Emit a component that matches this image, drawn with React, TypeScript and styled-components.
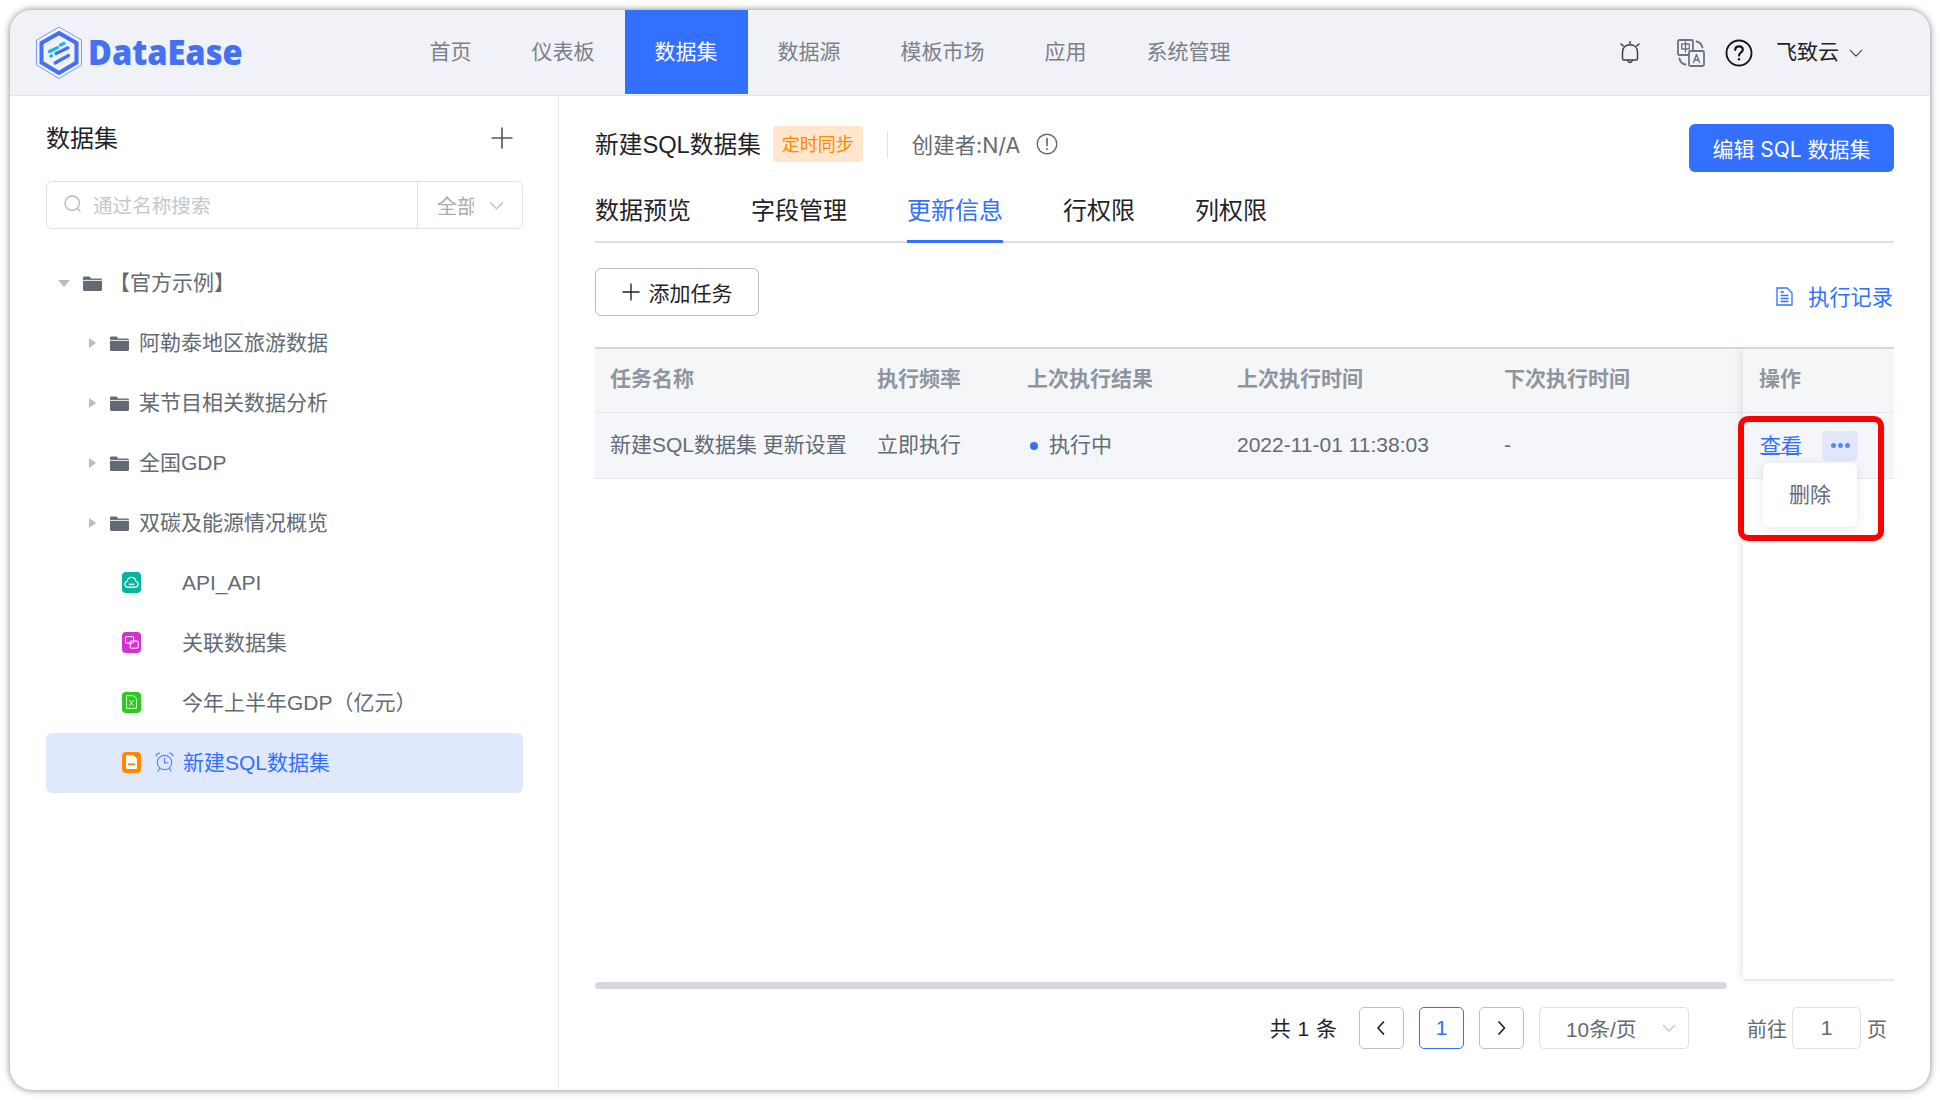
import React from 'react';
import styled, { createGlobalStyle } from 'styled-components';

const FONT = `"Liberation Sans", "Noto Sans CJK SC", sans-serif`;
const BLUE = '#3370ff';
const GREY = '#646a73';

const Global = createGlobalStyle`
  html, body { margin: 0; padding: 0; background: #fff; }
  body { width: 1940px; height: 1100px; overflow: hidden; font-family: ${FONT}; }
  * { box-sizing: border-box; }
`;

const Page = styled.div`
  width: 1940px;
  height: 1100px;
  padding: 10px;
`;
const Window = styled.div`
  width: 1920px;
  height: 1080px;
  border-radius: 22px;
  background: #fff;
  box-shadow: 0 0 7px rgba(0, 0, 0, 0.5);
  display: flex;
  flex-direction: column;
  overflow: hidden;
`;

const Header = styled.header`
  height: 86px;
  flex: none;
  display: flex;
  align-items: flex-start;
  background: #f0f2f8;
  border-bottom: 1px solid #e4e6ec;
`;
const LogoBox = styled.div`
  width: 389.5px;
  height: 85px;
  flex: none;
  padding-left: 26px;
  display: flex;
  align-items: center;
  gap: 5px;
`;
const LogoText = styled.span`
  font-family: "Open Sans", sans-serif;
  font-weight: 800;
  font-size: 36px;
  margin-bottom: 2px;
  color: #4370f5;
  transform: scaleX(0.905);
  transform-origin: left center;
`;
const Nav = styled.nav`
  display: flex;
  height: 84px;
`;
const NavItem = styled.div<{ $active?: boolean }>`
  height: 84px;
  padding: 0 30px 5px;
  display: flex;
  align-items: center;
  font-size: 21px;
  color: ${p => (p.$active ? '#fff' : '#7c8088')};
  background: ${p => (p.$active ? BLUE : 'transparent')};
`;
const HeaderRight = styled.div`
  margin-left: auto;
  height: 85px;
  display: flex;
  align-items: center;
  padding-right: 67px;
  color: #1f2329;
`;
const HeaderIcon = styled.span<{ $gap: number }>`
  display: flex;
  margin-right: ${p => p.$gap}px;
`;
const UserName = styled.span`
  font-size: 21px;
  color: #1f2329;
  margin: 0 10px 5px 0;
`;

const Body = styled.div`
  flex: 1;
  display: flex;
  min-height: 0;
`;
const Sidebar = styled.aside`
  width: 549px;
  flex: none;
  border-right: 1px solid #e6e8ee;
  padding: 22px 35px 0 36px;
`;
const SideHead = styled.div`
  height: 40px;
  display: flex;
  align-items: center;
  justify-content: space-between;
  padding-right: 10px;
`;
const SideTitle = styled.span`
  font-size: 24px;
  color: #1f2329;
  margin: 0 0 4px 0;
`;
const SearchBox = styled.div`
  margin-top: 23px;
  width: 477px;
  height: 48px;
  border: 1px solid #dee0e3;
  border-radius: 6px;
  display: flex;
  align-items: center;
`;
const SearchMain = styled.div`
  width: 371px;
  height: 100%;
  display: flex;
  align-items: center;
  padding: 0 0 2px 16px;
  gap: 10px;
  border-right: 1px solid #dee0e3;
  font-size: 19.6px;
  color: #c4c7cc;
`;
const SearchScope = styled.div`
  flex: 1;
  display: flex;
  align-items: center;
  justify-content: space-between;
  padding: 0 18px 0 19px;
  font-size: 20px;
  color: #a8abb2;
`;
const ScopeText = styled.span`
  display: block;
  width: 37px;
  overflow: hidden;
  white-space: nowrap;
`;
const Tree = styled.div`
  margin-top: 24px;
`;
const TreeRow = styled.div<{ $pad: number; $active?: boolean }>`
  height: 60px;
  padding-left: ${p => p.$pad}px;
  display: flex;
  align-items: center;
  font-size: 21px;
  color: ${p => (p.$active ? BLUE : GREY)};
  background: ${p => (p.$active ? '#dfe8fd' : 'transparent')};
  border-radius: 6px;
`;
const TreeLabel = styled.span<{ $latin?: boolean }>`
  margin-bottom: ${p => (p.$latin ? 1 : 4)}px;
`;
const CaretBox = styled.span`
  width: 24px;
  flex: none;
  display: flex;
  justify-content: center;
`;
const CaretRight = styled.i`
  width: 0;
  height: 0;
  border-left: 7px solid #b9bcc2;
  border-top: 5px solid transparent;
  border-bottom: 5px solid transparent;
`;
const CaretDown = styled.i`
  width: 0;
  height: 0;
  border-top: 7px solid #b9bcc2;
  border-left: 6px solid transparent;
  border-right: 6px solid transparent;
`;
const FolderSlot = styled.span<{ $before: number; $after: number }>`
  display: flex;
  margin: 0 ${p => p.$after}px 0 ${p => p.$before}px;
`;
const TypeBadge = styled.span<{ $color: string }>`
  width: 19px;
  height: 21px;
  flex: none;
  margin-bottom: 2px;
  border-radius: 4px;
  background: ${p => p.$color};
  display: flex;
  align-items: center;
  justify-content: center;
`;
const AlarmSlot = styled.span<{ $after: number }>`
  width: 19px;
  height: 20px;
  flex: none;
  margin: 0 ${p => p.$after}px 2px 14px;
  display: flex;
`;

const Main = styled.main`
  flex: 1;
  min-width: 0;
  padding: 28px 36px 0;
  display: flex;
  flex-direction: column;
`;
const TitleRow = styled.div`
  height: 48px;
  display: flex;
  justify-content: space-between;
  align-items: flex-start;
`;
const TitleGroup = styled.div`
  height: 40px;
  display: flex;
  align-items: center;
`;
const Title = styled.h1`
  margin: 0 0 2px;
  font-size: 23.7px;
  font-weight: 400;
  color: #1f2329;
`;
const SyncTag = styled.span`
  margin-left: 12px;
  width: 90px;
  height: 36px;
  padding-bottom: 2px;
  display: flex;
  align-items: center;
  justify-content: center;
  background: #ffe6cc;
  color: #ff8800;
  font-size: 18px;
  border-radius: 4px;
`;
const VDivider = styled.i`
  width: 1px;
  height: 27px;
  margin: 0 24px;
  background: #dee0e3;
`;
const Creator = styled.span`
  font-family: "Inter", "Noto Sans CJK SC", sans-serif;
  font-size: 21.4px;
  margin-bottom: 2px;
  color: ${GREY};
`;
const InfoWrap = styled.span`
  display: flex;
  margin-left: 16px;
`;
const PrimaryBtn = styled.button`
  width: 205px;
  height: 48px;
  border: none;
  border-radius: 6px;
  background: ${BLUE};
  color: #fff;
  font-family: "Inter", "Noto Sans CJK SC", sans-serif;
  font-size: 21px;
  padding: 0;
`;
const Tabs = styled.div`
  margin-top: 7px;
  height: 64px;
  display: flex;
  gap: 60px;
  border-bottom: 2px solid #dee0e3;
`;
const Tab = styled.div<{ $active?: boolean }>`
  height: 64px;
  padding-top: 16px;
  line-height: 32px;
  font-size: 24px;
  color: ${p => (p.$active ? BLUE : '#1f2329')};
  border-bottom: 3px solid ${p => (p.$active ? BLUE : 'transparent')};
`;
const Toolbar = styled.div`
  margin-top: 25px;
  display: flex;
  justify-content: space-between;
  align-items: center;
`;
const AddBtn = styled.button`
  width: 164px;
  height: 48px;
  border: 1px solid #bbbfc4;
  border-radius: 6px;
  background: #fff;
  font-family: ${FONT};
  font-size: 21px;
  color: #1f2329;
  padding: 0;
  display: flex;
  align-items: center;
  justify-content: center;
  gap: 9px;
`;
const RecordLink = styled.span`
  margin-top: 8px;
  font-size: 21.2px;
  color: ${BLUE};
  display: flex;
  align-items: center;
  gap: 15px;
`;
const RecordText = styled.span`
  margin-bottom: 2px;
  padding-right: 1px;
`;

const TableArea = styled.div`
  margin-top: 31px;
  height: 642px;
  display: flex;
  align-items: stretch;
`;
const TableLeft = styled.div`
  flex: 1;
  min-width: 0;
  display: flex;
  flex-direction: column;
  border-top: 2px solid #d3d7e0;
`;
const GridHead = styled.div`
  height: 64px;
  padding-left: 15px;
  display: grid;
  grid-template-columns: 267px 150px 210px 267px 1fr;
  align-items: center;
  background: #f5f6f8;
  border-bottom: 1px solid #e4e8f0;
  font-size: 21px;
  font-weight: 700;
  color: #8f959e;
`;
const GridRow = styled.div`
  height: 66px;
  padding-left: 15px;
  display: grid;
  grid-template-columns: 267px 150px 210px 267px 1fr;
  align-items: center;
  background: #f5f6fa;
  border-bottom: 1px solid #e4e8f0;
  font-size: 21px;
  color: ${GREY};
`;
const HeadCell = styled.span`
  white-space: nowrap;
  margin-bottom: 7px;
`;
const Cell = styled.span<{ $latin?: boolean }>`
  white-space: nowrap;
  margin-bottom: ${p => (p.$latin ? 1 : 5)}px;
`;
const StatusCell = styled.span`
  display: flex;
  align-items: center;
  gap: 11px;
  padding-left: 3px;
`;
const StatusText = styled.span`
  margin-bottom: 5px;
`;
const Dot = styled.i`
  width: 8px;
  height: 8px;
  border-radius: 50%;
  background: ${BLUE};
`;
const HScroll = styled.div`
  margin-top: auto;
  width: 1132px;
  height: 7px;
  border-radius: 4px;
  background: #d5d8e2;
`;
const FixedCol = styled.div`
  position: relative;
  z-index: 1;
  width: 151px;
  flex: none;
  margin-bottom: 8px;
  border-top: 2px solid #d3d7e0;
  border-bottom: 2px solid #e8ebf6;
  background: #fff;
  box-shadow: -5px 0 8px -3px rgba(0, 0, 0, 0.1);
`;
const OpsHead = styled.div`
  height: 64px;
  padding: 0 0 7px 16px;
  display: flex;
  align-items: center;
  background: #f5f6f8;
  border-bottom: 1px solid #e4e8f0;
  font-size: 21px;
  font-weight: 700;
  color: #8f959e;
`;
const OpsRow = styled.div`
  position: relative;
  height: 66px;
  padding-left: 17px;
  display: flex;
  align-items: center;
  background: #f5f6fa;
  border-bottom: 1px solid #e4e8f0;
`;
const ViewLink = styled.span`
  font-size: 21px;
  margin-bottom: 4px;
  color: ${BLUE};
  text-decoration: underline;
  text-decoration-thickness: 1px;
  text-underline-offset: 0px;
`;
const MoreBtn = styled.span`
  margin-left: 20px;
  width: 36px;
  height: 30px;
  border-radius: 5px;
  background: #e1e8fb;
  display: flex;
  align-items: center;
  justify-content: center;
  gap: 2px;
`;
const MoreDot = styled.i`
  width: 5px;
  height: 5px;
  border-radius: 50%;
  background: #5c88f5;
`;
const Popover = styled.div`
  position: absolute;
  left: 20px;
  top: 50px;
  width: 94px;
  height: 64px;
  padding-bottom: 4px;
  background: #fff;
  border-radius: 6px;
  box-shadow: 0 2px 12px rgba(31, 35, 41, 0.1);
  display: flex;
  align-items: center;
  justify-content: center;
  font-size: 21px;
  color: ${GREY};
`;
const Highlight = styled.div`
  position: absolute;
  left: -5px;
  top: 3px;
  width: 146px;
  height: 125px;
  border: 6px solid #ff0000;
  border-radius: 10px;
  pointer-events: none;
`;

const Pager = styled.div`
  margin-top: 18px;
  height: 42px;
  padding-right: 7px;
  display: flex;
  justify-content: flex-end;
  align-items: center;
`;
const Total = styled.span`
  font-size: 21px;
  word-spacing: 1px;
  color: #1f2329;
  margin: 0 22px 3px 0;
`;
const PageBtn = styled.span<{ $active?: boolean }>`
  width: 45px;
  height: 42px;
  margin-right: 15px;
  border: 1px solid ${p => (p.$active ? BLUE : '#bbbfc4')};
  border-radius: 5px;
  display: flex;
  align-items: center;
  justify-content: center;
  font-size: 21px;
  color: ${p => (p.$active ? BLUE : '#1f2329')};
`;
const SizeSelect = styled.span`
  width: 150px;
  height: 42px;
  margin-right: 58px;
  padding: 0 12px 0 26px;
  border: 1px solid #dee0e3;
  border-radius: 5px;
  display: flex;
  align-items: center;
  justify-content: space-between;
  font-size: 20.8px;
  color: ${GREY};
`;
const PagerText = styled.span`
  font-size: 20px;
  color: ${GREY};
`;
const JumpInput = styled.span`
  width: 69px;
  height: 42px;
  margin: 0 6px 0 5px;
  border: 1px solid #dee0e3;
  border-radius: 5px;
  display: flex;
  align-items: center;
  justify-content: center;
  font-size: 21px;
  color: ${GREY};
`;

const Chevron = ({ size = 15, color = '#1f2329', w = 1.4 }: { size?: number; color?: string; w?: number }) => (
  <svg width={size} height={size} viewBox="0 0 16 16" fill="none" stroke={color} strokeWidth={w} strokeLinecap="round" strokeLinejoin="round">
    <path d="M1.5 5 L8 11.5 L14.5 5" />
  </svg>
);

const Logo = () => (
  <svg width="47" height="54" viewBox="6 4 47 54" fill="none">
    <path d="M29 5 L51.5 18 L51.5 43 L29 56.5 L6.5 43 L6.5 18 Z" stroke="#7c9cf7" strokeWidth="1" />
    <path d="M29 11 L46.5 21 L46.5 40.5 L29 51 L11.5 40.5 L11.5 21 Z" stroke="#4370f5" strokeWidth="4" />
    <g strokeLinecap="round" strokeWidth="3.2">
      <path d="M30.5 23 L34 21.4" stroke="#13b5f5" />
      <path d="M19.5 29.5 L27.5 25.6" stroke="#13b5f5" />
      <path d="M20.8 34.2 L21.6 33.8" stroke="#13b5f5" />
      <path d="M26 31.5 L38 25.8" stroke="#4370f5" />
      <path d="M25 41 L38.5 33.5" stroke="#4370f5" />
    </g>
  </svg>
);

const BellIcon = () => (
  <svg width="20" height="26" viewBox="0 0 20 26" fill="none" stroke="#3a3f47" strokeWidth="1.5" strokeLinecap="round" strokeLinejoin="round">
    <path d="M2.5 18.2 V12 C2.5 7.6 5.6 4.8 10 4.8 C14.4 4.8 17.5 7.6 17.5 12 V18.2 C17.5 19.4 17 20 16 20 H4 C3 20 2.5 19.4 2.5 18.2 Z" />
    <path d="M7.8 20.5 C8.2 23 11.8 23 12.2 20.5" />
    <path d="M10 1.8 V3.2" />
    <path d="M1 4 L3.2 5.8" />
    <path d="M19 4 L16.8 5.8" />
  </svg>
);

const TranslateIcon = () => (
  <svg width="28" height="28" viewBox="0 0 28 28" fill="none" stroke="#6e727a" strokeWidth="1.8" strokeLinecap="round" strokeLinejoin="round">
    <rect x="1" y="1" width="15" height="15" rx="1.5" fill="#f0f2f8" />
    <rect x="12" y="12" width="15" height="15" rx="1.5" fill="#f0f2f8" />
    <rect x="4.7" y="5" width="7.6" height="5" strokeWidth="1.3" />
    <path d="M8.5 3 V13" strokeWidth="1.3" />
    <path d="M16.5 23.5 L19.5 15.5 L22.5 23.5 M17.5 21 H21.5" strokeWidth="1.4" />
    <path d="M19.5 2.5 C22.5 3 24.5 5 25.5 8.5" />
    <path d="M2.5 19.5 C3 22.5 5.5 25 8.5 25.5" />
  </svg>
);

const HelpIcon = () => (
  <svg width="28" height="28" viewBox="0 0 28 28" fill="none" stroke="#15181d" strokeWidth="1.9" strokeLinecap="round">
    <circle cx="14" cy="14" r="12.5" />
    <path d="M10.2 11 C10.2 8.7 12 7.4 14 7.4 C16.2 7.4 17.8 8.8 17.8 10.8 C17.8 13.3 14 13.6 14 16.6" strokeWidth="2.2" />
    <circle cx="14" cy="20.3" r="1.2" fill="#15181d" stroke="none" />
  </svg>
);

const SearchIcon = () => (
  <svg width="20" height="20" viewBox="0 0 20 20" fill="none" stroke="#b5b9bf" strokeWidth="1.4" strokeLinecap="round">
    <circle cx="9.2" cy="9.2" r="7.2" />
    <path d="M14.6 14.6 L17 17" />
  </svg>
);

const PlusIcon = ({ size, color }: { size: number; color: string }) => (
  <svg width={size} height={size} viewBox="0 0 20 20" fill="none" stroke={color} strokeWidth="1.5">
    <path d="M10 0.5 V19.5 M0.5 10 H19.5" />
  </svg>
);

const FolderIcon = () => (
  <svg width="19" height="15" viewBox="0 0 19 15">
    <path d="M0 2 C0 1 .7 .5 1.5 .5 H6.5 L8.2 2.5 H17.5 C18.4 2.5 19 3 19 4 V13.5 C19 14.4 18.4 15 17.5 15 H1.5 C.6 15 0 14.4 0 13.5 Z" fill="#646a73" />
    <path d="M0 4.4 H19" stroke="#fff" strokeWidth="0.9" />
  </svg>
);

const ApiGlyph = () => (
  <svg width="15" height="13" viewBox="0 0 16 14" fill="none" stroke="#fff" strokeWidth="1.2" strokeLinejoin="round">
    <path d="M4 12 C1.8 12 .8 10.5 .8 9 C.8 7.3 2 6.2 3.4 6 C3.6 3.2 5.6 1.5 8 1.5 C10.4 1.5 12.4 3.2 12.6 6 C14 6.2 15.2 7.3 15.2 9 C15.2 10.5 14.2 12 12 12 Z" />
    <path d="M5 9 H11" strokeWidth="1.6" />
  </svg>
);
const JoinGlyph = () => (
  <svg width="14" height="13" viewBox="0 0 14 13" fill="none" stroke="#fff" strokeWidth="1">
    <rect x="0.6" y="0.6" width="8" height="6.5" rx="1" />
    <rect x="5.2" y="5" width="8" height="7.2" rx="1" />
  </svg>
);
const ExcelGlyph = () => (
  <svg width="11" height="14" viewBox="0 0 12 15" fill="none" stroke="#fff" strokeWidth="1">
    <path d="M.6.6 H8 L11.4 4 V14.4 H.6 Z" />
    <path d="M3.8 5.5 L8.2 11.5 M8.2 5.5 L3.8 11.5" />
  </svg>
);
const SqlGlyph = () => (
  <svg width="11" height="14" viewBox="0 0 12 15">
    <path d="M0 1 Q0 0 1 0 H8 L12 4 V14 Q12 15 11 15 H1 Q0 15 0 14 Z" fill="#fff" />
    <path d="M2 10 H10" stroke="#ff8800" strokeWidth="2" />
  </svg>
);

const AlarmIcon = () => (
  <svg width="19" height="20" viewBox="0 0 19 20" fill="none" stroke="#5c88f5" strokeWidth="1.2" strokeLinecap="round">
    <circle cx="9.5" cy="10.5" r="7.2" />
    <path d="M9.5 6 V10.8 H13" />
    <path d="M1 4 C1.5 2.3 3 1.2 4.6 1.2 M18 4 C17.5 2.3 16 1.2 14.4 1.2" />
    <path d="M4.6 16.5 L3 19 M14.4 16.5 L16 19" />
  </svg>
);

const InfoIcon = () => (
  <svg width="22" height="22" viewBox="0 0 22 22" fill="none" stroke="#646a73" strokeWidth="1.4" strokeLinecap="round">
    <circle cx="11" cy="11" r="9.8" />
    <path d="M11 5.5 V12.5" strokeWidth="1.7" />
    <circle cx="11" cy="16" r="1" fill="#646a73" stroke="none" />
  </svg>
);

const DocIcon = () => (
  <svg width="17" height="19" viewBox="0 0 17 19" fill="none" stroke="#3370ff" strokeWidth="1.3">
    <path d="M1 1 H11 L16 6 V18 H1 Z" />
    <path d="M4.5 8.5 H12.5 M4.5 11.5 H12.5 M4.5 14.5 H12.5 M4.5 5 H8" />
  </svg>
);

const NavLeft = () => (
  <svg width="12" height="18" viewBox="0 0 12 18" fill="none" stroke="#1f2329" strokeWidth="1.7" strokeLinecap="round" strokeLinejoin="round">
    <path d="M7.5 3 L2 9 L7.5 15" />
  </svg>
);
const NavRight = () => (
  <svg width="12" height="18" viewBox="0 0 12 18" fill="none" stroke="#1f2329" strokeWidth="1.7" strokeLinecap="round" strokeLinejoin="round">
    <path d="M3 3 L8.5 9 L3 15" />
  </svg>
);

const navItems = ['首页', '仪表板', '数据集', '数据源', '模板市场', '应用', '系统管理'];
const tabs = ['数据预览', '字段管理', '更新信息', '行权限', '列权限'];
const folders = ['阿勒泰地区旅游数据', '某节目相关数据分析', '全国GDP', '双碳及能源情况概览'];

export default function App() {
  return (
    <Page>
      <Global />
      <Window>
        <Header>
          <LogoBox>
            <Logo />
            <LogoText>DataEase</LogoText>
          </LogoBox>
          <Nav>
            {navItems.map(n => (
              <NavItem key={n} $active={n === '数据集'}>{n}</NavItem>
            ))}
          </Nav>
          <HeaderRight>
            <HeaderIcon $gap={37}><BellIcon /></HeaderIcon>
            <HeaderIcon $gap={20}><TranslateIcon /></HeaderIcon>
            <HeaderIcon $gap={23}><HelpIcon /></HeaderIcon>
            <UserName>飞致云</UserName>
            <Chevron size={14} color="#3a3f47" w={1.3} />
          </HeaderRight>
        </Header>
        <Body>
          <Sidebar>
            <SideHead>
              <SideTitle>数据集</SideTitle>
              <PlusIcon size={22} color="#4e5969" />
            </SideHead>
            <SearchBox>
              <SearchMain>
                <SearchIcon />
                通过名称搜索
              </SearchMain>
              <SearchScope>
                <ScopeText>全部</ScopeText>
                <Chevron size={15} color="#bbbfc4" />
              </SearchScope>
            </SearchBox>
            <Tree>
              <TreeRow $pad={6}>
                <CaretBox><CaretDown /></CaretBox>
                <FolderSlot $before={7} $after={7}><FolderIcon /></FolderSlot>
                <TreeLabel>【官方示例】</TreeLabel>
              </TreeRow>
              {folders.map(f => (
                <TreeRow key={f} $pad={34}>
                  <CaretBox><CaretRight /></CaretBox>
                  <FolderSlot $before={6} $after={10}><FolderIcon /></FolderSlot>
                  <TreeLabel>{f}</TreeLabel>
                </TreeRow>
              ))}
              <TreeRow $pad={76}>
                <TypeBadge $color="#04b49c"><ApiGlyph /></TypeBadge>
                <AlarmSlot $after={8} />
                <TreeLabel $latin>API_API</TreeLabel>
              </TreeRow>
              <TreeRow $pad={76}>
                <TypeBadge $color="#d132d1"><JoinGlyph /></TypeBadge>
                <AlarmSlot $after={8} />
                <TreeLabel>关联数据集</TreeLabel>
              </TreeRow>
              <TreeRow $pad={76}>
                <TypeBadge $color="#2acb1d"><ExcelGlyph /></TypeBadge>
                <AlarmSlot $after={8} />
                <TreeLabel>今年上半年GDP（亿元）</TreeLabel>
              </TreeRow>
              <TreeRow $pad={76} $active>
                <TypeBadge $color="#ff8800"><SqlGlyph /></TypeBadge>
                <AlarmSlot $after={9}><AlarmIcon /></AlarmSlot>
                <TreeLabel>新建SQL数据集</TreeLabel>
              </TreeRow>
            </Tree>
          </Sidebar>
          <Main>
            <TitleRow>
              <TitleGroup>
                <Title>新建SQL数据集</Title>
                <SyncTag>定时同步</SyncTag>
                <VDivider />
                <Creator>创建者:N/A</Creator>
                <InfoWrap><InfoIcon /></InfoWrap>
              </TitleGroup>
              <PrimaryBtn>编辑 SQL 数据集</PrimaryBtn>
            </TitleRow>
            <Tabs>
              {tabs.map(t => (
                <Tab key={t} $active={t === '更新信息'}>{t}</Tab>
              ))}
            </Tabs>
            <Toolbar>
              <AddBtn>
                <PlusIcon size={18} color="#1f2329" />
                添加任务
              </AddBtn>
              <RecordLink>
                <DocIcon />
                <RecordText>执行记录</RecordText>
              </RecordLink>
            </Toolbar>
            <TableArea>
              <TableLeft>
                <GridHead>
                  <HeadCell>任务名称</HeadCell>
                  <HeadCell>执行频率</HeadCell>
                  <HeadCell>上次执行结果</HeadCell>
                  <HeadCell>上次执行时间</HeadCell>
                  <HeadCell>下次执行时间</HeadCell>
                </GridHead>
                <GridRow>
                  <Cell>新建SQL数据集 更新设置</Cell>
                  <Cell>立即执行</Cell>
                  <StatusCell><Dot /><StatusText>执行中</StatusText></StatusCell>
                  <Cell $latin>2022-11-01 11:38:03</Cell>
                  <Cell $latin>-</Cell>
                </GridRow>
                <HScroll />
              </TableLeft>
              <FixedCol>
                <OpsHead>操作</OpsHead>
                <OpsRow>
                  <ViewLink>查看</ViewLink>
                  <MoreBtn>
                    <MoreDot />
                    <MoreDot />
                    <MoreDot />
                  </MoreBtn>
                  <Popover>删除</Popover>
                  <Highlight />
                </OpsRow>
              </FixedCol>
            </TableArea>
            <Pager>
              <Total>共 1 条</Total>
              <PageBtn><NavLeft /></PageBtn>
              <PageBtn $active>1</PageBtn>
              <PageBtn><NavRight /></PageBtn>
              <SizeSelect>
                10条/页
                <Chevron size={14} color="#bbbfc4" />
              </SizeSelect>
              <PagerText>前往</PagerText>
              <JumpInput>1</JumpInput>
              <PagerText>页</PagerText>
            </Pager>
          </Main>
        </Body>
      </Window>
    </Page>
  );
}
